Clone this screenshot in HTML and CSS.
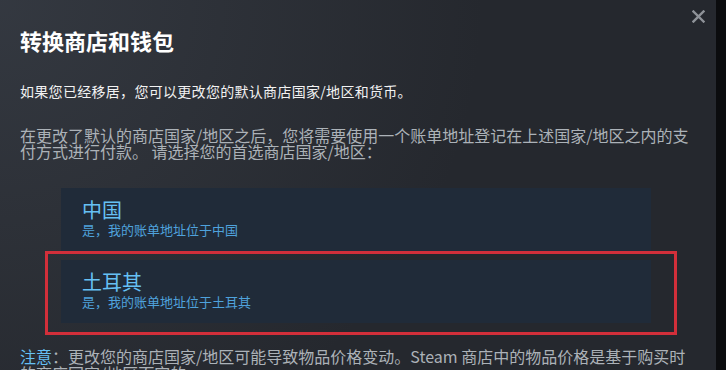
FILE: index.html
```html
<!DOCTYPE html>
<html lang="zh-CN">
<head>
<meta charset="utf-8">
<title>转换商店和钱包</title>
<link rel="stylesheet" href="styles.css">
</head>
<body>
<div class="screen">
  <div class="modal">
    <button class="close" aria-label="关闭">
      <svg width="13" height="13" viewBox="0 0 13 13"><path d="M1.5 1.5 L11.5 11.5 M11.5 1.5 L1.5 11.5" stroke="#8e9298" stroke-width="2.4" stroke-linecap="square" fill="none"/></svg>
    </button>
    <h1 class="title">转换商店和钱包</h1>
    <p class="lead">如果您已经移居，您可以更改您的默认商店国家/地区和货币。</p>
    <p class="desc">在更改了默认的商店国家/地区之后，您将需要使用一个账单地址登记在上述国家/地区之内的支付方式进行付款。 请选择您的首选商店国家/地区：</p>
    <div class="options">
      <div class="option">
        <div class="option-name">中国</div>
        <div class="option-sub">是，我的账单地址位于中国</div>
      </div>
      <div class="option highlighted">
        <div class="option-name">土耳其</div>
        <div class="option-sub">是，我的账单地址位于土耳其</div>
      </div>
    </div>
    <p class="note"><span class="note-label">注意</span>：更改您的商店国家/地区可能导致物品价格变动。Steam 商店中的物品价格是基于购买时的商店国家/地区而定的。</p>
  </div>
  <div class="edge"></div>
</div>
</body>
</html>
```

FILE: styles.css
```css
* { box-sizing: border-box; }
html, body { margin: 0; padding: 0; }
body {
  width: 726px;
  height: 370px;
  overflow: hidden;
  background: #0b0c0e;
  font-family: "Noto Sans CJK SC", "Noto Sans", sans-serif;
}
.screen {
  display: flex;
  height: 370px;
}
.modal {
  position: relative;
  width: 716px;
  height: 370px;
  overflow: hidden;
  padding: 27px 20px 0 20px;
  background: radial-gradient(circle at top left, rgba(74, 81, 92, 0.4) 0%, rgba(75, 81, 92, 0) 60%), #25282e;
}
.edge {
  flex: 1;
  background: #0b0c0e;
}
.close {
  position: absolute;
  top: 10px;
  right: 11px;
  width: 13px;
  height: 13px;
  padding: 0;
  border: 0;
  background: none;
  display: block;
}
.close svg { display: block; }
.title {
  margin: 0;
  font-size: 22px;
  line-height: 26px;
  font-weight: 700;
  color: #ffffff;
}
.lead {
  margin: 28px 0 0 0;
  font-size: 14px;
  line-height: 20px;
  letter-spacing: 0.3px;
  color: #f2f2f2;
}
.desc {
  margin: 26px 0 0 0;
  font-size: 16px;
  line-height: 16px;
  color: #acb2b8;
}
.options {
  margin: 29px 0 0 41px;
  width: 590px;
  display: flex;
  flex-direction: column;
  gap: 9px;
}
.option {
  position: relative;
  background: #202b39;
  padding: 10px 21px 13px 21px;
}
.option-name {
  font-size: 20px;
  line-height: 23px;
  color: #66c0f4;
}
.option-sub {
  font-size: 13px;
  line-height: 17px;
  color: #4fa2dc;
}
.highlighted::after {
  content: "";
  position: absolute;
  left: -16px;
  right: -26px;
  top: -9px;
  bottom: -12px;
  border: 3px solid #d22f3a;
  pointer-events: none;
}
.note {
  margin: 25px 0 0 0;
  font-size: 16px;
  line-height: 17px;
  color: #acb2b8;
}
.note-label {
  color: #66c0f4;
}
```
